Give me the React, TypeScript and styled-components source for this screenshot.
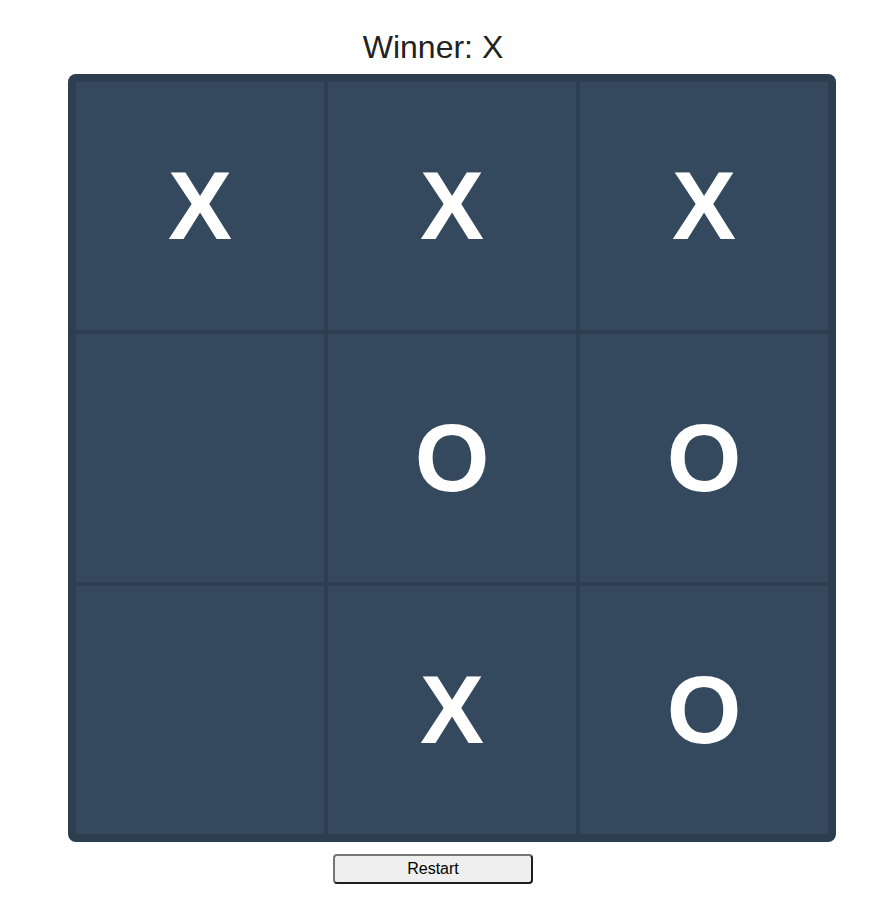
import React, { useState } from "react";
import styled, { createGlobalStyle } from "styled-components";

const GlobalStyle = createGlobalStyle`
  body {
    margin: 0;
    background: #ffffff;
    font-family: "Liberation Sans", Arial, sans-serif;
  }
`;

const Page = styled.div`
  width: 866px;
  padding-top: 29px;
  display: flex;
  flex-direction: column;
  align-items: center;
`;

const Status = styled.h2`
  margin: 0 0 8px;
  font-size: 32px;
  font-weight: normal;
  color: #222;
  line-height: 37px;
`;

const Board = styled.div`
  width: 768px;
  height: 768px;
  box-sizing: border-box;
  margin-left: 38px;
  padding: 8px;
  background: #2c3e50;
  border-radius: 8px;
  display: grid;
  grid-template-columns: repeat(3, 1fr);
  grid-template-rows: repeat(3, 1fr);
  gap: 4px;
`;

const Cell = styled.div`
  background: #34495e;
  display: flex;
  align-items: center;
  justify-content: center;
  color: #ffffff;
  font-size: 96px;
  font-weight: bold;
  cursor: pointer;
`;

const RestartButton = styled.button`
  margin-top: 12px;
  width: 200px;
  height: 30px;
  padding: 0;
  font-family: "Liberation Sans", Arial, sans-serif;
  font-size: 16px;
  color: #000;
  background: #efefef;
  border: 2px solid #1e1e1e;
  border-top-color: #767676;
  border-left-color: #767676;
  border-radius: 4px;
  cursor: pointer;
`;

const initial = ["X", "X", "X", "", "O", "O", "", "X", "O"];

export default function App() {
  const [cells, setCells] = useState<string[]>(initial);

  return (
    <Page>
      <GlobalStyle />
      <Status>Winner: X</Status>
      <Board>
        {cells.map((value, i) => (
          <Cell key={i}>{value}</Cell>
        ))}
      </Board>
      <RestartButton onClick={() => setCells(Array(9).fill(""))}>Restart</RestartButton>
    </Page>
  );
}
